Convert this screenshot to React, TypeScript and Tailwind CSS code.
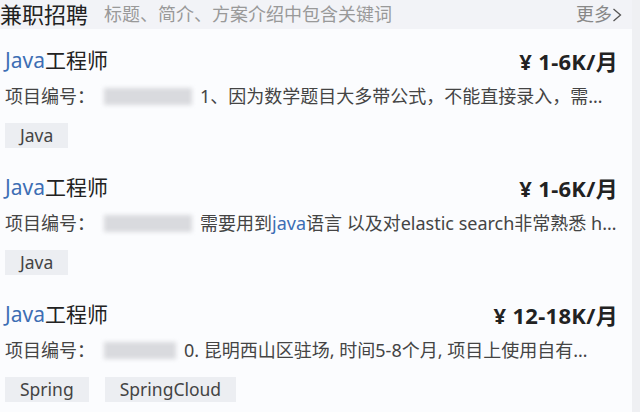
const FONT = '[font-family:"Noto_Sans","Noto_Sans_CJK_SC",sans-serif]'

interface Job {
  price: string
  desc: React.ReactNode
  tags: string[]
  blurW: number
}

const JOBS: Job[] = [
  { price: '¥ 1-6K/月', desc: '1、因为数学题目大多带公式，不能直接录入，需…', tags: ['Java'], blurW: 88 },
  {
    price: '¥ 1-6K/月',
    desc: (
      <>
        需要用到<span className="text-[#3d6eb4]">java</span>语言 以及对elastic search非常熟悉 h…
      </>
    ),
    tags: ['Java'],
    blurW: 88,
  },
  { price: '¥ 12-18K/月', desc: '0. 昆明西山区驻场, 时间5-8个月, 项目上使用自有…', tags: ['Spring', 'SpringCloud'], blurW: 72 },
]

function JobRow({ job }: { job: Job }) {
  return (
    <div className="pt-[17px] pb-[8px] pl-[5px] pr-[14px]">
      <div className="h-[30px] flex items-center justify-between">
        <div className="text-[21px] text-[#222]">
          <span className="text-[#3d6eb4]">Java</span>工程师
        </div>
        <div className="text-[22px] font-bold text-[#222] tracking-[0.3px]">{job.price}</div>
      </div>
      <div className="mt-[9px] h-[22px] flex items-center text-[18px] text-[#444] whitespace-nowrap">
        <span className="w-[99px] shrink-0">项目编号：</span>
        <div className="h-[17px] bg-[#d9dade] blur-[2px] shrink-0" style={{ width: job.blurW }} />
        <span className="ml-[8px] truncate">{job.desc}</span>
      </div>
      <div className="mt-[16px] flex gap-[16px]">
        {job.tags.map(tag => (
          <span key={tag} className="h-[25px] px-[15px] flex items-center bg-[#eceef2] text-[17.5px] text-[#444]">
            {tag}
          </span>
        ))}
      </div>
    </div>
  )
}

export default function App() {
  return (
    <div className={`w-[640px] h-[412px] overflow-hidden bg-[#eff0f3] ${FONT}`}>
      <div className="w-[632px] h-full bg-[#fbfcfe]">
        <div className="h-[29px] bg-[#f2f3f7] flex items-center pr-[10px]">
          <span className="text-[22px] text-[#222]">兼职招聘</span>
          <span className="ml-[16px] text-[18px] text-[#999]">标题、简介、方案介绍中包含关键词</span>
          <span className="ml-auto flex items-center text-[18px] text-[#888]">
            更多
            <svg width="10" height="18" viewBox="0 0 10 18" fill="none" stroke="#555" strokeWidth="1.3">
              <path d="M1.5 3l7 6-7 6" />
            </svg>
          </span>
        </div>
        {JOBS.map((job, i) => (
          <JobRow key={i} job={job} />
        ))}
      </div>
    </div>
  )
}
